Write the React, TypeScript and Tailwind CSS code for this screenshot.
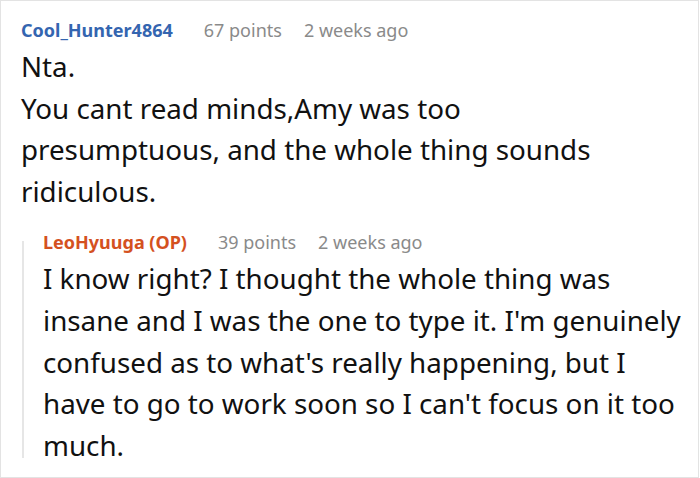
import React from 'react';

const font = { fontFamily: '"Noto Sans", "Open Sans", sans-serif' };

function Meta({ name, points, color }: { name: string; points: number; color: string }) {
  return (
    <div className="flex items-baseline text-[18px] leading-[24px] whitespace-nowrap">
      <span className={`font-bold ${color}`}>{name}</span>
      <span className="ml-[31px] text-[#8a8a8a]">{points} points</span>
      <span className="ml-[22px] text-[#8a8a8a]">2 weeks ago</span>
    </div>
  );
}

export default function App() {
  return (
    <div style={font} className="w-[699px] h-[478px] bg-white border border-[#e3e3e3] pt-[17px] pl-[20px] text-[#111] overflow-hidden">
      {/* top comment */}
      <Meta name="Cool_Hunter4864" points={67} color="text-[#3465b0]" />
      <div className="mt-[4px] text-[27.75px] leading-[41.6px]">
        <div>Nta.</div>
        <div className="whitespace-nowrap">You cant read minds,Amy was too</div>
        <div className="whitespace-nowrap">presumptuous, and the whole thing sounds</div>
        <div className="whitespace-nowrap">ridiculous.</div>
      </div>

      {/* reply */}
      <div className="flex mt-[18px] ml-[1px]">
        <div className="w-[2px] bg-[#e6e6e6] mt-[11px] mb-[8px] shrink-0"></div>
        <div className="ml-[19px]">
          <Meta name="LeoHyuuga (OP)" points={39} color="text-[#d4511f]" />
          <div className="mt-[4px] text-[27.75px] leading-[41.6px]">
            <div className="whitespace-nowrap">I know right? I thought the whole thing was</div>
            <div className="whitespace-nowrap">insane and I was the one to type it. I'm genuinely</div>
            <div className="whitespace-nowrap">confused as to what's really happening, but I</div>
            <div className="whitespace-nowrap">have to go to work soon so I can't focus on it too</div>
            <div className="whitespace-nowrap">much.</div>
          </div>
        </div>
      </div>
    </div>
  );
}
